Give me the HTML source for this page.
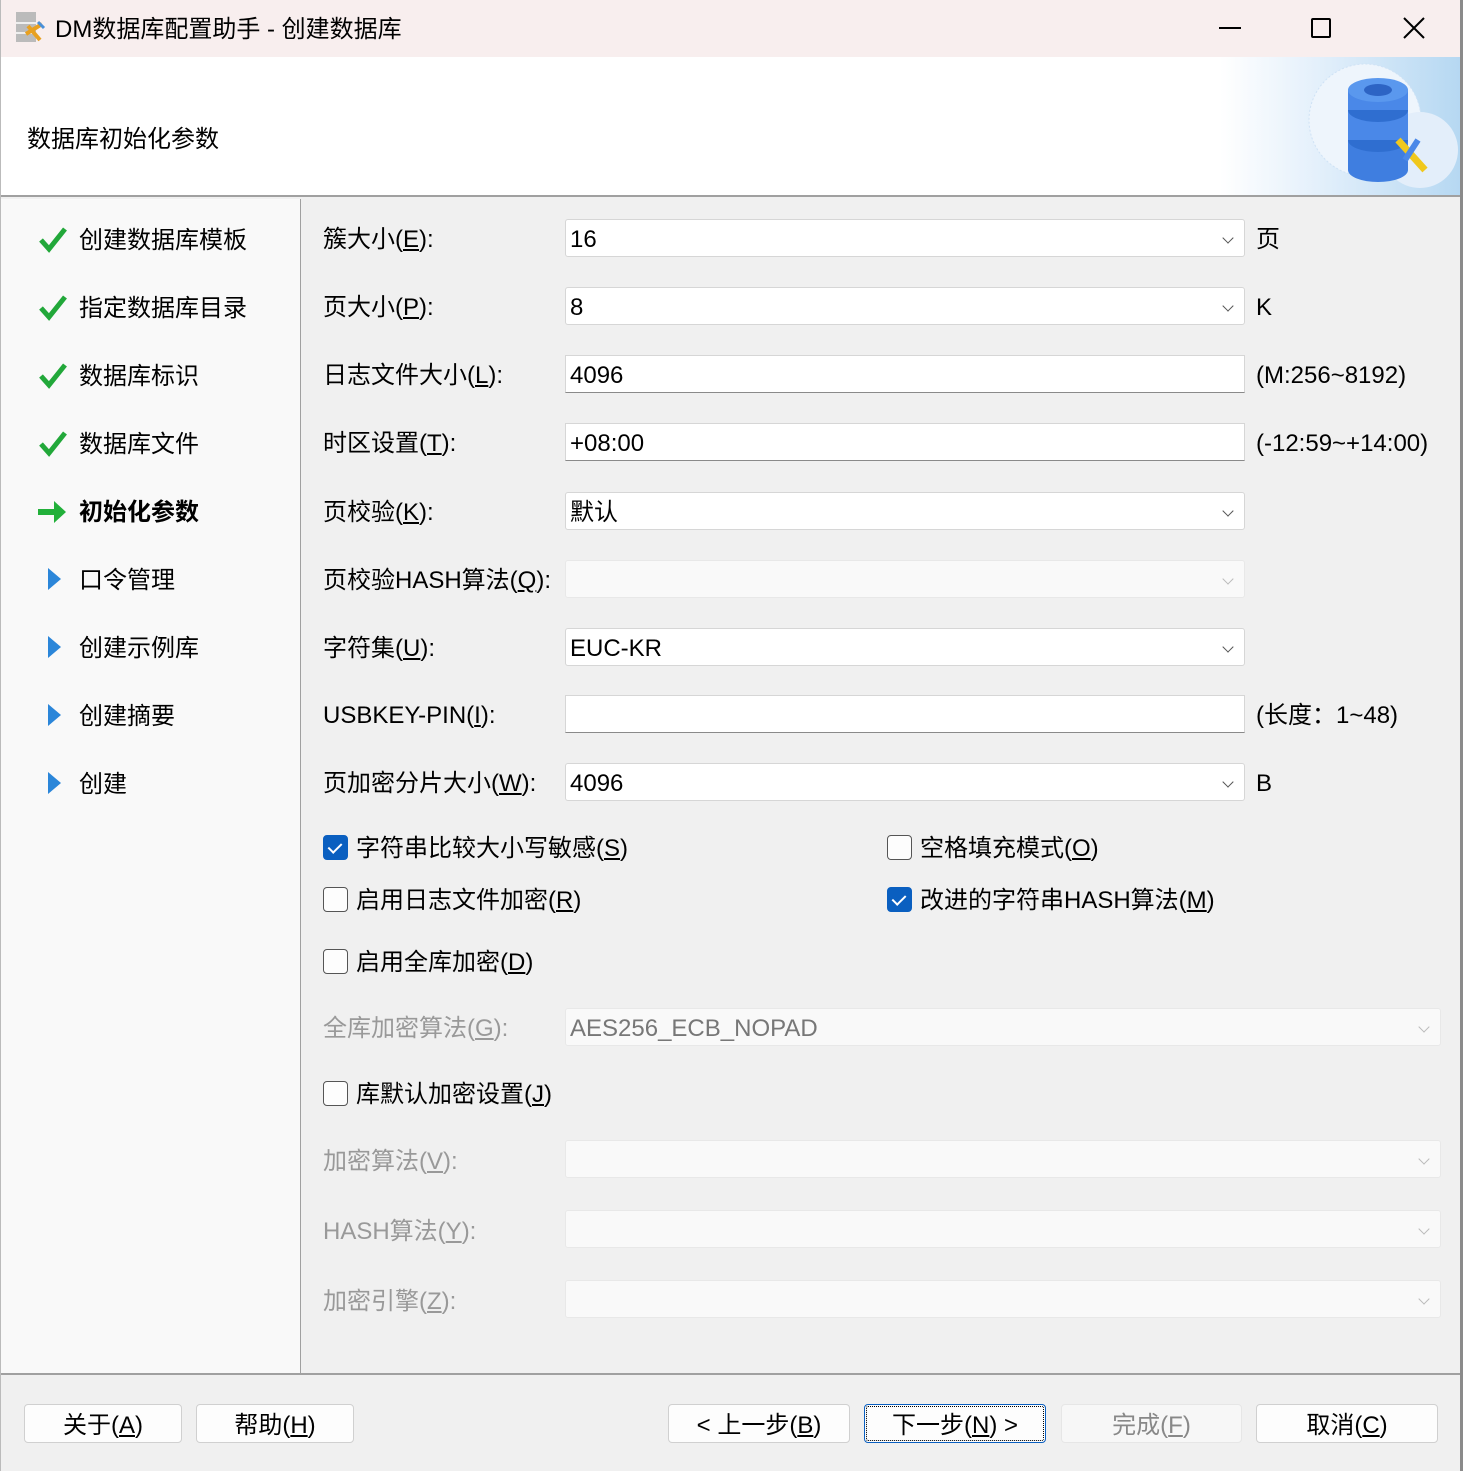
<!DOCTYPE html><html><head><meta charset="utf-8"><style>
*{box-sizing:border-box;margin:0;padding:0}
body{width:1463px;height:1471px;position:relative;overflow:hidden;background:#f0f0f0;font-family:"Liberation Sans","Noto Sans CJK SC",sans-serif;font-size:24px;color:#000}
.a{position:absolute;white-space:nowrap}
.tb{left:0;top:0;width:1463px;height:57px;background:#f8eeee}
.hd{left:0;top:57px;width:1463px;height:140px;background:#fff;border-bottom:2px solid #a0a0a0}
.lp{left:0;top:199px;width:301px;height:1174px;background:#f9f9f9;border-right:1px solid #a0a0a0}
.bt{left:0;top:1373px;width:1463px;height:2px;background:#a0a0a0}
.in{position:absolute;background:#fff;border:1px solid #d6d6d6;border-bottom:1px solid #8a8a8a;height:38px;padding-left:4px;padding-top:2px;line-height:36px}
.dd{border-bottom-color:#d6d6d6;border-radius:3px}
.dis{background:#f9f9f9;border-color:#e8e8e8;color:#777}
.ch{position:absolute;right:12px;top:14px;width:8px;height:8px;border-right:1.3px solid #555;border-bottom:1.3px solid #555;transform:rotate(45deg)}
.dis .ch{border-color:#bbb}
.lb{position:absolute;line-height:30px;transform:translateY(2px)}
.g{color:#999}
.cb{position:absolute;width:25px;height:25px;border:1.5px solid #555;border-radius:4px;background:#fdfdfd}
.cb.on{background:#0a5fc0;border-color:#0a5fc0}
.cb.on:after{content:"";position:absolute;left:7px;top:4px;width:6px;height:11px;border-right:2px solid #fff;border-bottom:2px solid #fff;transform:rotate(45deg)}
.btn{position:absolute;top:1404px;height:39px;background:#fdfdfd;border:1px solid #d0d0d0;border-radius:4px;text-align:center;line-height:37px;padding-top:2px}
.nav{position:absolute;left:79px;line-height:30px;transform:translateY(2px)}
.tk{position:absolute;left:38px;width:30px;height:30px}
.tri{position:absolute;left:48px;width:0;height:0;border-top:11px solid transparent;border-bottom:11px solid transparent;border-left:13px solid #2b86d9}
</style></head><body>
<div class="a tb"></div>
<svg class="a" style="left:16px;top:12px" width="30" height="32"><rect x="0" y="0" width="20" height="30" fill="#bbb"/><rect x="0" y="10" width="20" height="2" fill="#eee"/><rect x="0" y="20" width="20" height="2" fill="#eee"/><path d="M10 22 L26 12 M12 14 L24 28" stroke="#e8a020" stroke-width="4"/><path d="M22 10 L28 16" stroke="#4a90d9" stroke-width="3"/></svg>
<div class="a" style="left:55px;top:15px;font-size:24px;line-height:30px">DM数据库配置助手 - 创建数据库</div>
<div class="a" style="left:1219px;top:27px;width:22px;height:1.5px;background:#000"></div>
<div class="a" style="left:1311px;top:18px;width:20px;height:20px;border:2px solid #000;border-radius:2px"></div>
<svg class="a" style="left:1402px;top:16px" width="24" height="24"><path d="M2 2L22 22M22 2L2 22" stroke="#000" stroke-width="2"/></svg>
<div class="a hd"></div>
<div class="a" style="left:1220px;top:57px;width:240px;height:138px;background:linear-gradient(90deg,#fff,#e4f0fb 40%,#b6d8f2)"></div>
<svg class="a" style="left:1300px;top:60px" width="160" height="135"><circle cx="65" cy="60" r="56" fill="#eef5fc" stroke="#cfe2f5" stroke-dasharray="2 2"/><circle cx="120" cy="90" r="38" fill="#e3eefa"/><ellipse cx="78" cy="110" rx="30" ry="12" fill="#3f7ee0"/><rect x="48" y="80" width="60" height="30" fill="#3f7ee0"/><ellipse cx="78" cy="80" rx="30" ry="12" fill="#2f6ed0"/><rect x="48" y="50" width="60" height="30" fill="#4a88e8"/><ellipse cx="78" cy="50" rx="30" ry="12" fill="#2f6ed0"/><rect x="48" y="30" width="60" height="20" fill="#4a88e8"/><ellipse cx="78" cy="30" rx="30" ry="12" fill="#5a98ee"/><ellipse cx="78" cy="30" rx="14" ry="6" fill="#2d64c4"/><path d="M98 80 L125 110" stroke="#f0c81c" stroke-width="7"/><path d="M118 80 L105 100" stroke="#4a88e8" stroke-width="6"/></svg>
<div class="a" style="left:27px;top:125px;line-height:30px">数据库初始化参数</div>
<div class="a lp"></div>
<div class="a bt"></div>

<svg class="tk" style="top:225px" viewBox="0 0 30 30"><path d="M3 15 L11 24 L27 4" fill="none" stroke="#22a83a" stroke-width="5"/></svg><div class="nav" style="top:224px">创建数据库模板</div>
<svg class="tk" style="top:293px" viewBox="0 0 30 30"><path d="M3 15 L11 24 L27 4" fill="none" stroke="#22a83a" stroke-width="5"/></svg><div class="nav" style="top:292px">指定数据库目录</div>
<svg class="tk" style="top:361px" viewBox="0 0 30 30"><path d="M3 15 L11 24 L27 4" fill="none" stroke="#22a83a" stroke-width="5"/></svg><div class="nav" style="top:360px">数据库标识</div>
<svg class="tk" style="top:429px" viewBox="0 0 30 30"><path d="M3 15 L11 24 L27 4" fill="none" stroke="#22a83a" stroke-width="5"/></svg><div class="nav" style="top:428px">数据库文件</div>
<svg class="tk" style="top:497px" viewBox="0 0 30 30"><path d="M0 12h16v-8l12 11-12 11v-8h-16z" fill="#22b03a"/></svg><div class="nav" style="top:496px;font-weight:bold">初始化参数</div>
<div class="tri" style="top:568px"></div><div class="nav" style="top:564px">口令管理</div>
<div class="tri" style="top:636px"></div><div class="nav" style="top:632px">创建示例库</div>
<div class="tri" style="top:704px"></div><div class="nav" style="top:700px">创建摘要</div>
<div class="tri" style="top:772px"></div><div class="nav" style="top:768px">创建</div>

<div class="lb" style="left:323px;top:223px">簇大小(<u>E</u>):</div>
<div class="in dd" style="left:565px;top:219px;width:680px">16<i class="ch"></i></div>
<div class="lb" style="left:1256px;top:223px">页</div>
<div class="lb" style="left:323px;top:291px">页大小(<u>P</u>):</div>
<div class="in dd" style="left:565px;top:287px;width:680px">8<i class="ch"></i></div>
<div class="lb" style="left:1256px;top:291px">K</div>
<div class="lb" style="left:323px;top:359px">日志文件大小(<u>L</u>):</div>
<div class="in" style="left:565px;top:355px;width:680px">4096</div>
<div class="lb" style="left:1256px;top:359px">(M:256~8192)</div>
<div class="lb" style="left:323px;top:427px">时区设置(<u>T</u>):</div>
<div class="in" style="left:565px;top:423px;width:680px">+08:00</div>
<div class="lb" style="left:1256px;top:427px">(-12:59~+14:00)</div>
<div class="lb" style="left:323px;top:496px">页校验(<u>K</u>):</div>
<div class="in dd" style="left:565px;top:492px;width:680px">默认<i class="ch"></i></div>
<div class="lb" style="left:323px;top:564px">页校验HASH算法(<u>Q</u>):</div>
<div class="in dd dis" style="left:565px;top:560px;width:680px"><i class="ch"></i></div>
<div class="lb" style="left:323px;top:632px">字符集(<u>U</u>):</div>
<div class="in dd" style="left:565px;top:628px;width:680px">EUC-KR<i class="ch"></i></div>
<div class="lb" style="left:323px;top:699px">USBKEY-PIN(<u>I</u>):</div>
<div class="in" style="left:565px;top:695px;width:680px"></div>
<div class="lb" style="left:1256px;top:699px">(长度：1~48)</div>
<div class="lb" style="left:323px;top:767px">页加密分片大小(<u>W</u>):</div>
<div class="in dd" style="left:565px;top:763px;width:680px">4096<i class="ch"></i></div>
<div class="lb" style="left:1256px;top:767px">B</div>

<div class="cb on" style="left:323px;top:835px"></div><div class="lb" style="left:356px;top:832px">字符串比较大小写敏感(<u>S</u>)</div>
<div class="cb" style="left:887px;top:835px"></div><div class="lb" style="left:920px;top:832px">空格填充模式(<u>O</u>)</div>
<div class="cb" style="left:323px;top:887px"></div><div class="lb" style="left:356px;top:884px">启用日志文件加密(<u>R</u>)</div>
<div class="cb on" style="left:887px;top:887px"></div><div class="lb" style="left:920px;top:884px">改进的字符串HASH算法(<u>M</u>)</div>
<div class="cb" style="left:323px;top:949px"></div><div class="lb" style="left:356px;top:946px">启用全库加密(<u>D</u>)</div>
<div class="lb g" style="left:323px;top:1012px">全库加密算法(<u>G</u>):</div>
<div class="in dd dis" style="left:565px;top:1008px;width:876px">AES256_ECB_NOPAD<i class="ch"></i></div>
<div class="cb" style="left:323px;top:1081px"></div><div class="lb" style="left:356px;top:1078px">库默认加密设置(<u>J</u>)</div>
<div class="lb g" style="left:323px;top:1145px">加密算法(<u>V</u>):</div>
<div class="in dd dis" style="left:565px;top:1140px;width:876px"><i class="ch"></i></div>
<div class="lb g" style="left:323px;top:1215px">HASH算法(<u>Y</u>):</div>
<div class="in dd dis" style="left:565px;top:1210px;width:876px"><i class="ch"></i></div>
<div class="lb g" style="left:323px;top:1285px">加密引擎(<u>Z</u>):</div>
<div class="in dd dis" style="left:565px;top:1280px;width:876px"><i class="ch"></i></div>

<div class="btn" style="left:24px;width:158px">关于(<u>A</u>)</div>
<div class="btn" style="left:196px;width:158px">帮助(<u>H</u>)</div>
<div class="btn" style="left:668px;width:182px">&lt; 上一步(<u>B</u>)</div>
<div class="btn" style="left:864px;width:182px;border:1px solid #0a5fc0;outline:1px dotted #000;outline-offset:-3px">下一步(<u>N</u>) &gt;</div>
<div class="btn" style="left:1061px;width:181px;color:#888;background:#f7f7f7;border-color:#e6e6e6">完成(<u>F</u>)</div>
<div class="btn" style="left:1256px;width:182px">取消(<u>C</u>)</div>
<div class="a" style="left:1460px;top:0;width:3px;height:1471px;background:#8a8a8a"></div>
<div class="a" style="left:0;top:0;width:1px;height:1471px;background:#bbb"></div>
</body></html>
